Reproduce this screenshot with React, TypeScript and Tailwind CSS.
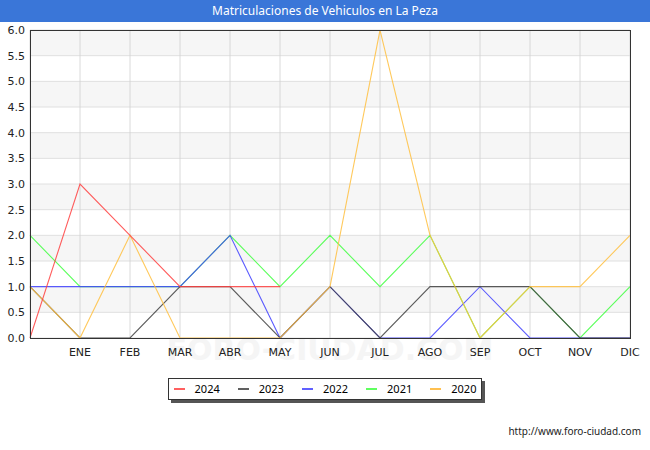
const months = ["", "ENE", "FEB", "MAR", "ABR", "MAY", "JUN", "JUL", "AGO", "SEP", "OCT", "NOV", "DIC"];

const series = [
  { name: "2021", color: "#40ff40", data: [2, 1, 1, 1, 2, 1, 2, 1, 2, 0, 1, 0, 1] },
  { name: "2022", color: "#4040ff", data: [1, 1, 1, 1, 2, 0, 1, 0, 0, 1, 0, 0, 0] },
  { name: "2023", color: "#404040", data: [1, 0, 0, 1, 1, 0, 1, 0, 1, 1, 1, 0, 0] },
  { name: "2020", color: "#ffbf40", data: [1, 0, 2, 0, 0, 0, 1, 6, 2, 0, 1, 1, 2] },
  { name: "2024", color: "#ff4040", data: [0, 3, 2, 1, 1, 1] },
];

const legend = [
  { name: "2024", color: "#ff6060" },
  { name: "2023", color: "#606060" },
  { name: "2022", color: "#6060ff" },
  { name: "2021", color: "#60ff60" },
  { name: "2020", color: "#ffc050" },
];

const x = (i: number) => 30 + i * 50;
const y = (v: number) => 316 - v * 51.33;

function Chart() {
  const ticks = Array.from({ length: 13 }, (_, i) => i * 0.5);
  return (
    <svg width={650} height={342} style={{ fontFamily: "'DejaVu Sans', sans-serif" }}>
      <text x={330} y={338} fontSize={30} textAnchor="middle" fill="#f5f5f5" fontWeight="bold">FORO-CIUDAD.COM</text>
      {ticks.slice(0, 12).map((t, i) =>
        i % 2 === 1 ? <rect key={t} x={30} y={y(t + 0.5)} width={600} height={y(t) - y(t + 0.5)} fill="#f6f6f6" /> : null
      )}
      {ticks.map((t) => (
        <g key={t}>
          <line x1={30} x2={630} y1={y(t)} y2={y(t)} stroke="#e0e0e0" />
          <text x={25} y={y(t) + 4} fontSize={11} textAnchor="end" fill="#222">{t.toFixed(1)}</text>
        </g>
      ))}
      {months.map((m, i) => (
        <g key={i}>
          <line x1={x(i)} x2={x(i)} y1={8} y2={316} stroke="#d0d0d0" strokeWidth={0.8} />
          {m && <text x={x(i)} y={334} fontSize={11} textAnchor="middle" fill="#222">{m}</text>}
        </g>
      ))}
      {series.map((s) => (
        <polyline
          key={s.name}
          fill="none"
          stroke={s.color}
          strokeWidth={1.1}
          opacity={0.85}
          points={s.data.map((v, i) => `${x(i)},${y(v)}`).join(" ")}
        />
      ))}
      <rect x={30.5} y={8.5} width={600} height={308} fill="none" stroke="#333" />
    </svg>
  );
}

export default function App() {
  return (
    <div className="w-[650px] h-[450px] bg-white flex flex-col font-['DejaVu_Sans',sans-serif]">
      <div className="h-[22px] bg-[#3a76d8] text-white text-[12px] flex items-center justify-center">
        Matriculaciones de Vehiculos en La Peza
      </div>
      <Chart />
      <div className="flex justify-center mt-[14px]">
        <div className="flex items-center gap-[18px] border border-[#333] shadow-[3px_3px_0_#555] px-[5px] h-[22px] text-[11px] text-black">
          {legend.map((l) => (
            <div key={l.name} className="flex items-center gap-[10px]">
              <span className="w-[11px] h-[2px]" style={{ background: l.color }} />
              {l.name}
            </div>
          ))}
        </div>
      </div>
      <div className="mt-auto mb-[11px] mr-[9px] text-right text-[10px] text-[#222]">http://www.foro-ciudad.com</div>
    </div>
  );
}
